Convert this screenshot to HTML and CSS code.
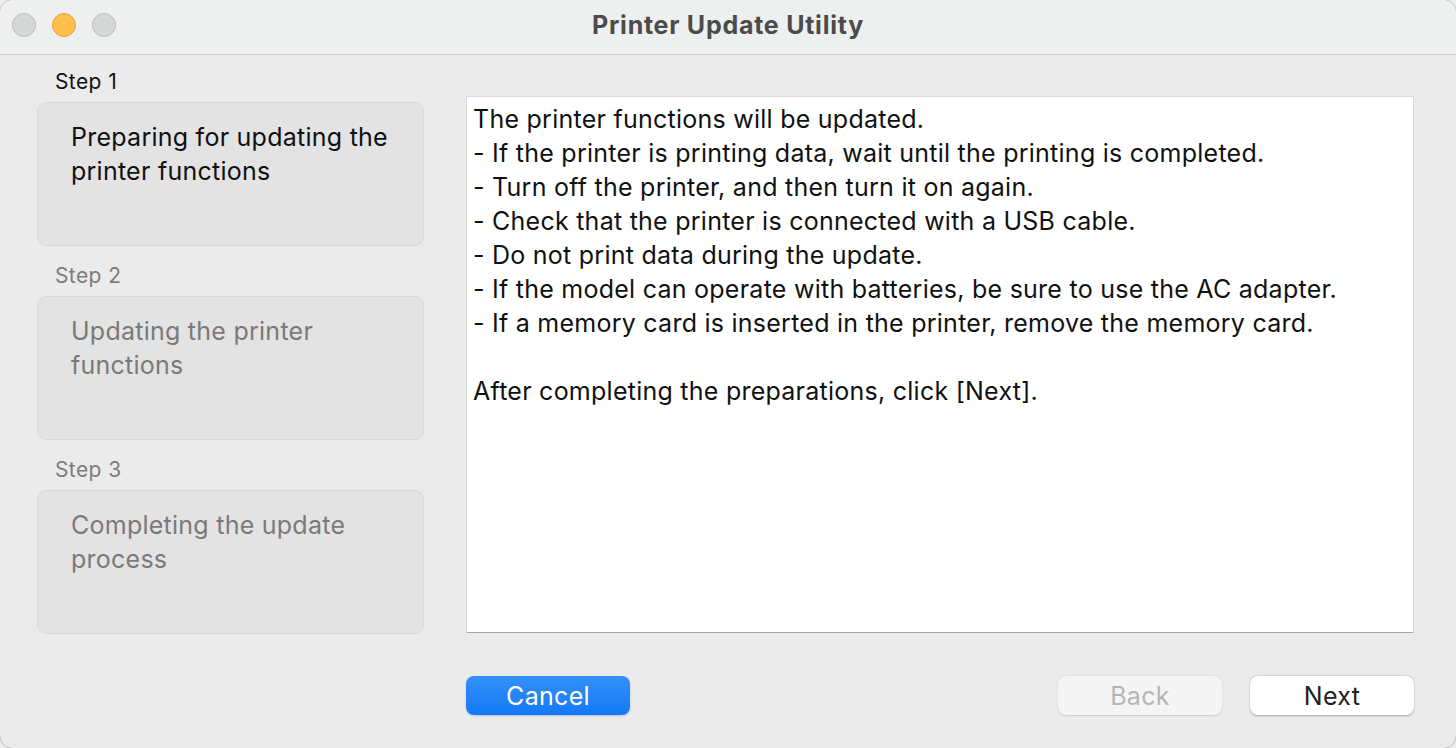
FILE: index.html
```html
<!DOCTYPE html>
<html lang="en">
<head>
<meta charset="utf-8">
<title>Printer Update Utility</title>
<link rel="stylesheet" href="styles.css">
</head>
<body>
<div class="window">
  <header class="titlebar">
    <div class="lights">
      <span class="light gray"></span>
      <span class="light yellow"></span>
      <span class="light gray"></span>
    </div>
    <div class="title">Printer Update Utility</div>
  </header>
  <main class="main">
    <section class="steps">
      <div class="step active">
        <div class="step-label">Step 1</div>
        <div class="step-box">Preparing for updating the printer functions</div>
      </div>
      <div class="step">
        <div class="step-label">Step 2</div>
        <div class="step-box">Updating the printer functions</div>
      </div>
      <div class="step">
        <div class="step-label">Step 3</div>
        <div class="step-box">Completing the update process</div>
      </div>
    </section>
    <section class="right">
      <div class="message">
        <p>The printer functions will be updated.</p>
        <p>- If the printer is printing data, wait until the printing is completed.</p>
        <p>- Turn off the printer, and then turn it on again.</p>
        <p>- Check that the printer is connected with a USB cable.</p>
        <p>- Do not print data during the update.</p>
        <p>- If the model can operate with batteries, be sure to use the AC adapter.</p>
        <p>- If a memory card is inserted in the printer, remove the memory card.</p>
        <p>&nbsp;</p>
        <p>After completing the preparations, click [Next].</p>
      </div>
      <div class="actions">
        <button class="btn primary">Cancel</button>
        <span class="spacer"></span>
        <button class="btn disabled">Back</button>
        <button class="btn default">Next</button>
      </div>
    </section>
  </main>
</div>
</body>
</html>
```
FILE: styles.css
```css
* { box-sizing: border-box; }
html, body { margin: 0; padding: 0; }
body {
  background: #ececec;
  font-family: Inter, "Noto Sans", sans-serif;
  width: 1456px;
  height: 748px;
  overflow: hidden;
}
.window {
  width: 1458px;
  height: 750px;
  margin: -1px;
  background: #ebebeb;
  border: 1px solid #bdbdbd;
  border-radius: 14px;
  overflow: hidden;
  display: flex;
  flex-direction: column;
}
.titlebar {
  height: 55px;
  flex: none;
  background: #eeefef;
  border-bottom: 1px solid #cfcfcf;
  position: relative;
  display: flex;
  align-items: center;
  justify-content: center;
}
.lights {
  position: absolute;
  left: 12px;
  top: 13px;
  display: flex;
  gap: 16px;
}
.light {
  width: 24px;
  height: 24px;
  border-radius: 50%;
  display: block;
}
.light.gray { background: #d6d7d7; border: 1px solid #bcbcbc; }
.light.yellow { background: #fec04b; border: 1px solid #dfa03c; }
.title {
  font-weight: 700;
  font-size: 25px;
  color: #4b4b4b;
  margin-top: -4px;
  letter-spacing: 0.75px;
}
.main {
  display: flex;
  padding: 15px 0 0 37px;
}
.steps {
  width: 387px;
  flex: none;
  display: flex;
  flex-direction: column;
  gap: 18px;
}
.step-label {
  font-size: 21px;
  line-height: 24px;
  color: #7d7d7d;
  padding-left: 18px;
  margin-bottom: 8px;
  letter-spacing: 0.4px;
}
.step.active .step-label { color: #111; }
.step-box {
  height: 144px;
  background: #e3e3e3;
  border: 1px solid #dadada;
  border-radius: 9px;
  padding: 17px 20px 0 33px;
  font-size: 25px;
  line-height: 34px;
  color: #7a7a7a;
  letter-spacing: 0.25px;
}
.step.active .step-box { color: #111; }
.right {
  width: 948px;
  margin-left: 42px;
  display: flex;
  flex-direction: column;
}
.message {
  margin-top: 26px;
  height: 537px;
  background: #fff;
  border: 1px solid #d9d9d9;
  border-bottom-color: #a9a9a9;
  padding: 5px 6px;
  font-size: 25px;
  line-height: 34px;
  color: #111;
  letter-spacing: 0.25px;
}
.message p { margin: 0; white-space: nowrap; }
.actions {
  margin-top: 43px;
  display: flex;
  gap: 28px;
}
.spacer { flex: 1; }
.btn {
  width: 164px;
  height: 39px;
  border-radius: 8px;
  font-family: inherit;
  font-size: 25px;
  letter-spacing: 0.3px;
  border: none;
  padding: 0;
}
.btn.primary {
  background: linear-gradient(#3590f8, #1579f6);
  color: #fff;
  box-shadow: 0 1px 2px rgba(0,80,200,0.25);
}
.btn.disabled {
  background: #f5f5f5;
  color: #b5b5b5;
  box-shadow: 0 0.5px 1.5px rgba(0,0,0,0.15);
}
.btn.default {
  background: #fff;
  color: #222;
  box-shadow: 0 0.5px 2px rgba(0,0,0,0.3);
}
```
